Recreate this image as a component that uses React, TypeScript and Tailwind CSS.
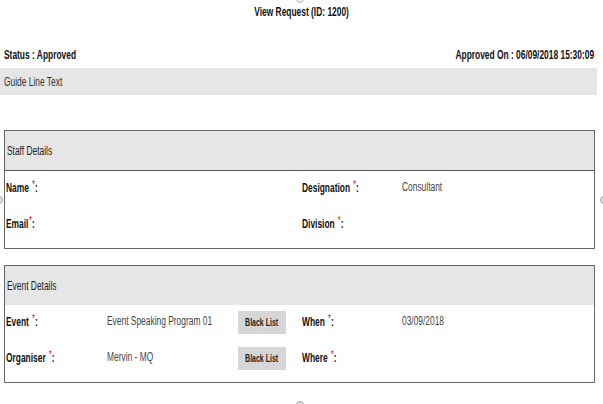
import React from 'react'

const font = 'font-["Liberation_Sans","Arial",sans-serif]'

// the source UI uses a condensed face; squeeze text horizontally
function Txt({ children, className = '' }: { children: React.ReactNode; className?: string }) {
  return <span className={`inline-block origin-left scale-x-70 whitespace-nowrap ${className}`}>{children}</span>
}

function Label({ text }: { text: string }) {
  return (
    <Txt className="text-[12px] font-bold text-[#111]">
      {text}
      <span className="relative -top-[4px] ml-[1px] text-[11px] font-normal text-[#ff0000]">*</span>:
    </Txt>
  )
}

function Value({ text }: { text: string }) {
  return <Txt className="text-[12px] text-[#444]">{text}</Txt>
}

function BlackList() {
  return (
    <button className="flex h-[23px] w-[48px] items-center justify-center overflow-hidden bg-[#d6d6d6] text-[10px] font-bold text-[#222]">
      <span className="inline-block scale-x-70 whitespace-nowrap">Black List</span>
    </button>
  )
}

export default function App() {
  return (
    <div className={`relative h-[404px] w-[603px] overflow-hidden bg-white ${font}`}>
      <h1 className="pt-[4px] text-center text-[12px] leading-[16px] font-bold text-[#111]">
        <span className="inline-block scale-x-70 whitespace-nowrap">View Request (ID: 1200)</span>
      </h1>

      <div className="mt-[27px] flex h-[16px] items-center justify-between pr-[9px] pl-[4px] text-[12px] font-bold text-[#111]">
        <Txt>Status : Approved</Txt>
        <span className="inline-block origin-right scale-x-70 whitespace-nowrap">Approved On : 06/09/2018 15:30:09</span>
      </div>

      <div className="mt-[5px] flex h-[27px] w-[597px] items-center bg-[#e6e6e6] pl-[4px] text-[12px] text-[#333]">
        <Txt>Guide Line Text</Txt>
      </div>

      {/* Staff details */}
      <section className="mt-[35px] ml-[4px] w-[591px] border border-[#666]">
        <div className="flex h-[40px] items-center border-b border-[#555] bg-[#e6e6e6] pl-[2px] text-[12px] text-[#222]">
          <Txt>Staff Details</Txt>
        </div>
        <div className="flex flex-col gap-[20px] pt-[8px] pb-[16px] pl-[1px] leading-[16px]">
          <div className="flex">
            <div className="w-[296px]"><Label text="Name " /></div>
            <div className="w-[100px]"><Label text="Designation " /></div>
            <div className="-mt-[1px]"><Value text="Consultant" /></div>
          </div>
          <div className="-mt-[1px] flex">
            <div className="w-[296px]"><Label text="Email" /></div>
            <div className="w-[100px]"><Label text="Division " /></div>
          </div>
        </div>
      </section>

      {/* Event details */}
      <section className="mt-[16px] ml-[4px] w-[591px] border border-[#666]">
        <div className="flex h-[39px] items-center bg-[#e6e6e6] pl-[2px] text-[12px] text-[#222]">
          <Txt>Event Details</Txt>
        </div>
        <div className="flex flex-col gap-[13px] pt-[6px] pb-[12px] pl-[1px]">
          <div className="flex h-[23px] items-center">
            <div className="-mt-[3px] w-[101px]"><Label text="Event " /></div>
            <div className="-mt-[5px] w-[131px]"><Value text="Event Speaking Program 01" /></div>
            <BlackList />
            <div className="-mt-[3px] ml-[16px] w-[100px]"><Label text="When " /></div>
            <div className="-mt-[5px]"><Value text="03/09/2018" /></div>
          </div>
          <div className="flex h-[23px] items-center">
            <div className="-mt-[3px] w-[101px]"><Label text="Organiser " /></div>
            <div className="-mt-[5px] w-[131px]"><Value text="Mervin - MQ" /></div>
            <BlackList />
            <div className="-mt-[3px] ml-[16px] w-[100px]"><Label text="Where " /></div>
          </div>
        </div>
      </section>

      {/* resize handles */}
      <span className="absolute top-[-5px] left-[296px] h-[8px] w-[8px] rounded-full border border-[#bbb] bg-[#eee]" />
      <span className="absolute top-[196px] left-[-5px] h-[8px] w-[8px] rounded-full border border-[#aaa] bg-[#ddd]" />
      <span className="absolute top-[196px] right-[-5px] h-[8px] w-[8px] rounded-full border border-[#aaa] bg-[#ddd]" />
      <span className="absolute bottom-[-5px] left-[296px] h-[8px] w-[8px] rounded-full border border-[#aaa] bg-[#ddd]" />
    </div>
  )
}
